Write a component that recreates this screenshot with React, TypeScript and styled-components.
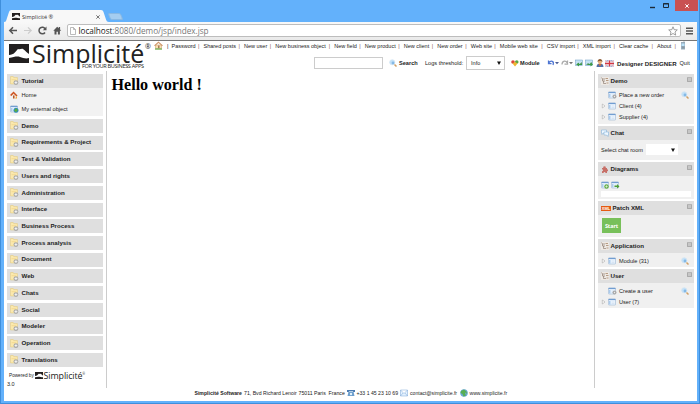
import React from "react";
import styled, { createGlobalStyle } from "styled-components";

const Global = createGlobalStyle`
  * { box-sizing: border-box; }
  html, body { margin: 0; padding: 0; }
  body { font-family: "Liberation Sans", Arial, sans-serif; color: #222; overflow: hidden; }
  svg { display: block; flex: none; }
`;

const Frame = styled.div`
  width: 700px; height: 404px; display: flex; flex-direction: column;
  background: #63b1fb; border: solid #3f8fdc; border-width: 0 1px 1px;
  padding: 0 2px 2px 3px;
`;
const TitleBar = styled.div`
  height: 22px; flex: none; display: flex; align-items: flex-start; justify-content: space-between;
`;
const TabStrip = styled.div`height: 22px; display: flex; align-items: flex-end;`;
const Tab = styled.div`
  position: relative; width: 105px; height: 12px; display: flex; align-items: center;
  padding: 1px 9px 0 8px; font: 5.6px "Open Sans", sans-serif; color: #333;
  > svg { z-index: 1; }
`;
const TabShape = styled.svg`position: absolute; left: 0; top: 0;`;
const TabTitle = styled.span`flex: 1; margin-left: 2px; z-index: 1; white-space: nowrap;`;
const NewTab = styled.div`
  width: 13px; height: 7px; margin: 0 0 2.5px 0; background: #a5cdf0; border: 1px solid #8ab9e3;
  border-radius: 2px; transform: skewX(22deg);
`;
const Controls = styled.div`display: flex; height: 11px; margin-right: -1px;`;
const Close = styled.div`
  width: 23px; height: 11px; background: #c95152; display: grid; place-items: center; margin-left: 3px;
`;
const Toolbar = styled.div`
  height: 19px; flex: none; display: flex; align-items: center; padding: 0 4px 1px 4px;
  background: linear-gradient(#f8f8f8, #e9e9e9); border-bottom: 1px solid #777;
`;
const Address = styled.div`
  flex: 1; height: 13px; margin: 0 5px 0 4px; border: 1px solid #bdbdbd; border-radius: 2px;
  background: #fff; display: flex; align-items: center; padding: 0 2px 0 2px;
  font: 8.2px/11px "Open Sans", sans-serif; color: #777;
  b { font-weight: 400; color: #222; }
  span { flex: 1; margin-left: 2.5px; letter-spacing: -0.04px; }
`;
const Page = styled.div`flex: 1; min-height: 0; background: #fff; display: flex; flex-direction: column;`;
const Header = styled.header`height: 30px; flex: none; display: flex;`;
const Brand = styled.div`
  width: 150px; flex: none; display: flex; padding: 3px 0 0 5px; color: #222;
`;
const BrandText = styled.div`
  position: relative; margin-left: 3px; width: 119px; height: 26px;
  font: 25px/26px "Open Sans", sans-serif; letter-spacing: 0; white-space: nowrap;
`;
const BrandName = styled.div`margin-top: -4px;`;
const Tagline = styled.div`
  position: absolute; left: 50px; top: 19px; font: 5.6px/7px "Open Sans", sans-serif;
  letter-spacing: -0.34px; color: #222;
`;
const Registered = styled.span`
  position: absolute; left: 113px; top: -1.5px; font: 7px/8px "Open Sans", sans-serif;
`;
const HeaderRows = styled.div`flex: 1; min-width: 0;`;
const Links = styled.nav`
  height: 9px; display: flex; align-items: center; font-size: 5.5px; line-height: 8px;
  white-space: nowrap; color: #222;
`;
const NavLink = styled.span<{ $w: number }>`
  width: ${(p) => p.$w}px; flex: none; display: flex; justify-content: space-between;
  padding-right: 4px;
  i { font-style: normal; color: #855; }
`;
const Actions = styled.div`
  height: 14px; margin-top: 6px; display: flex; align-items: center; padding-left: 160px;
  font-size: 6px; white-space: nowrap;
`;
const Field = styled.div`width: 69px; height: 12px; border: 1px solid #ccc; margin-right: 6px;`;
const Slot = styled.span<{ $w: number; $bold?: boolean; $size?: number }>`
  width: ${(p) => p.$w}px; flex: none; font-size: ${(p) => p.$size ?? 5.6}px;
  font-weight: ${(p) => (p.$bold ? 700 : 400)};
`;
const Select = styled.div<{ $w: number; $bordered?: boolean }>`
  width: ${(p) => p.$w}px; height: ${(p) => (p.$bordered ? 14 : 11.5)}px; flex: none;
  display: flex; align-items: center; justify-content: space-between; padding: 0 3px 0 4px;
  border: ${(p) => (p.$bordered ? "1px solid #ccc" : "0")}; background: #fff; font-size: 5.6px;
`;
const Columns = styled.div`height: 317px; flex: none; display: flex;`;
const Sidebar = styled.aside`
  width: 103px; flex: none; padding: 3px 3px 0; border-right: 1px solid #ccc;
  margin-right: 1px;
`;
const Heading = styled.div`
  height: 14px; display: flex; align-items: center; padding-left: 3px; background: #dfdfdf;
  font-size: 6.15px; font-weight: 700; color: #222; white-space: nowrap;
  > span { flex: 1; margin-left: 3px; padding-bottom: 1.6px; }
`;
const MenuBlock = styled.section`margin-bottom: 2.73px;`;
const MenuBody = styled.div`background: #f2f2f2; height: 28.3px;`;
const MenuItem = styled.div`
  height: 14.1px; display: flex; align-items: center; padding-left: 2.5px; gap: 3px; font-size: 5.7px;
`;
const Powered = styled.div`
  display: flex; align-items: center; height: 12px; margin-top: 1px; padding-left: 2px;
  font-size: 4.7px; white-space: nowrap;
`;
const SmallBrand = styled.span`
  font: 8.9px/12px "Open Sans", sans-serif; margin-left: 0.5px; letter-spacing: -0.1px;
  sup { font-size: 3px; line-height: 0; vertical-align: 4px; }
`;
const Version = styled.div`font-size: 5.5px; line-height: 7px; margin-top: -1px;`;
const Main = styled.main`flex: 1; padding: 4px 3.5px;`;
const Title = styled.h1`
  margin: 0; font: bold 16.1px/20px "Liberation Serif", "Times New Roman", serif; color: #000;
`;
const Panels = styled.aside`
  width: 103px; flex: none; border-left: 1px solid #ccc; padding: 3px 3px 0 3px;
`;
const Panel = styled.section<{ $h: number }>`
  height: ${(p) => p.$h}px; margin-bottom: 2.5px; background: #f0f0f0;
  ${Heading} > span { margin-left: 1.5px; }
`;
const PanelBody = styled.div<{ $top?: number }>`padding: ${(p) => p.$top ?? 2}px 3px 0;`;
const Row = styled.div<{ $indent?: boolean }>`
  height: 11.2px; display: flex; align-items: center; padding: 0 2px 0 ${(p) => (p.$indent ? 7 : 0)}px;
  font-size: 5.6px; white-space: nowrap;
`;
const RowText = styled.span<{ $gap?: number }>`flex: 1; margin-left: ${(p) => p.$gap ?? 3}px;`;
const Minimize = styled.i`
  width: 5px; height: 5px; margin: -3px 2px 0 0; border: 1px solid #aaa; border-top-color: #b5b5b5;
  border-radius: 1px; background: #c6c6c6;
`;
const IconPair = styled.div`display: flex; gap: 1px;`;
const Blank = styled.div`height: 6px; background: #fff; margin-top: 1.5px;`;
const Start = styled.button`
  width: 19px; height: 15px; padding: 0; margin-left: 1px; border: 0; background: #78c05a; color: #fff;
  font: bold 5.5px "Open Sans", sans-serif; letter-spacing: -0.1px; display: block;
`;
const XmlBadge = styled.i`
  width: 10px; height: 5px; background: #e55b12; color: #fff; font: bold 4px/5px "Liberation Sans", sans-serif;
  text-align: center;
`;
const Footer = styled.footer`
  height: 9px; display: flex; align-items: center; padding-left: 190.5px; font-size: 5.25px; white-space: nowrap;
`;

const Mountain = ({ w, h }: { w: number; h: number }) => (
  <svg width={w} height={h} viewBox="0 0 20 19" preserveAspectRatio="none">
    <path d="M0 0h20v10c-2-1-3-3-6-5-1.500-1-3 1-5 0C7 7 5 11 0 11z" fill="#221f1f" />
    <path d="M0 14c5-1 8-2 11-1 3 1 6 2 9 1v5H0z" fill="#221f1f" />
  </svg>
);
const Folder = () => (
  <svg width="8.500" height="9.500" viewBox="0 0 16 18">
    <path d="M1 1h5l1 2h7v12H1z" fill="#fbe9ae" stroke="#e3c778" />
    <path d="M3 7h8" stroke="#f1d58a" strokeWidth="1.500" />
    <circle cx="11.2" cy="12.500" r="4.600" fill="#aaa" />
    <path d="M8.500 12.500h5.400M11.200 9.800v5.400" stroke="#fff" strokeWidth="1.500" />
  </svg>
);
const House = ({ red }: { red?: boolean }) =>
  red ? (
    <svg width="9" height="8" viewBox="0 0 18 16">
      <path d="M3 7l6-5 6 6-2 7H6V9z" fill="#f5e6d5" />
      <path d="M0 8l7-7 8 8-2 2-6-6-4 5z" fill="#cc5220" />
      <path d="M6 9h3v6H6z" fill="#b45a2c" /><path d="M10 15l4-5v5z" fill="#eea53b" />
    </svg>
  ) : (
    <svg width="9" height="9" viewBox="0 0 18 18">
      <path d="M3 8h12v7H3z" fill="#f7ddb0" stroke="#c39562" />
      <path d="M0 9l9-8 9 8-2 1-7-6-7 6z" fill="#cf9467" />
      <path d="M8 9h3v6H8z" fill="#a77c58" /><path d="M2 16h14" stroke="#83b563" strokeWidth="3" />
    </svg>
  );
const Lens = () => (
  <svg width="8" height="8" viewBox="0 0 16 16">
    <circle cx="6.500" cy="6.500" r="5.200" fill="#c3e1f8" stroke="#d0e2f2" strokeWidth="1.2" />
    <circle cx="8" cy="8" r="2.800" fill="#85b9e5" />
    <path d="M11 11l4 4" stroke="#d0a067" strokeWidth="3" />
  </svg>
);
const Win = ({ badge }: { badge?: "gear" | "globe" | "go" | "add" }) => (
  <svg width={badge ? 9 : 8} height="8" viewBox={badge ? "0 0 18 16" : "0 0 16 16"}>
    <rect x="1" y="2" width="14" height="12" rx="1" fill="#edf6ff" stroke="#8ba8ca" />
    <path d="M1 3h14" stroke="#719dd1" strokeWidth="2.500" />
    <path d="M2 6h3v7H2z" fill="#abcbed" /><path d="M7 8h6M7 11h6" stroke="#c3d3e5" />
    {badge === "gear" && <g><circle cx="13" cy="11" r="4" fill="#aaa" /><circle cx="13" cy="11" r="1.300" fill="#eee" /></g>}
    {badge === "globe" && <g><circle cx="12" cy="10.5" r="5" fill="#2e8bc9" /><path d="M8 11l4-5 4 4-4 5z" fill="#5cac42" /></g>}
    {badge === "go" && <path d="M7 9h5V6l5 5-5 4v-3H7z" fill="#4e9e35" />}
    {badge === "add" && <g><circle cx="11" cy="11" r="4.5" fill="#68b048" /><path d="M8.5 11h5M11 8.5v5" stroke="#fff" /></g>}
  </svg>
);
const Expand = () => (
  <svg width="5" height="6" viewBox="0 0 5 6"><path d="M1.3 1l2.7 2-2.7 2z" fill="#fff" stroke="#aaa" strokeWidth=".6" /></svg>
);
const Down = () => (
  <svg width="4" height="4" viewBox="0 0 4 4"><path d="M0 .5h4L2 4z" fill="#111" /></svg>
);
const Tree = () => (
  <svg width="8" height="8" viewBox="0 0 16 16" fill="none" stroke="#8a776b" strokeWidth="1.3">
    <path d="M0 0h16v16H0z" fill="#eee9e4" stroke="none" />
    <path d="M1 1l2 3h5M3 4v4h5M5 8v5h5" /><path d="M9 3h5M10 7h5M11 12h4" stroke="#b69b83" strokeWidth="2" />
  </svg>
);
const Chat = () => (
  <svg width="8" height="8" viewBox="0 0 16 16" fill="#eef7ff" stroke="#76a8d7">
    <path d="M1 2h10v6H5l-3 3V8H1z" /><path d="M6 6h9v6h-1v3l-3-3H6z" />
  </svg>
);
const Puzzle = () => (
  <svg width="8" height="8" viewBox="0 0 16 16" fill="#c76f67">
    <path d="M2 6h2.500a2.700 2.700 0 1 1 5 0H12v2.500a2.200 2.200 0 1 1 0 4.400V16H9a2 2 0 0 0-4 0H2v-3.500a2 2 0 0 0 0-4z" />
  </svg>
);
const Balls = () => (
  <svg width="8" height="8" viewBox="0 0 16 16">
    <circle cx="4" cy="6" r="3.6" fill="#dc4636" /><circle cx="11.5" cy="6" r="3.6" fill="#59a744" /><path d="M3 9l5-3 5 3-5 6z" fill="#edb431" />
  </svg>
);
const Undo = ({ redo }: { redo?: boolean }) => (
  <svg width="14" height="8" viewBox="0 0 28 16">
    <path d={redo ? "M2 11c0-8 9-9 10-3M13 3v7H7" : "M3 3v6h6M3 8c5-6 12-4 9 4"} fill="none" stroke={redo ? "#aaa" : "#4d75d2"} strokeWidth="2.5" />
    <path d="M16 6h8l-4 4.500z" fill={redo ? "#777" : "#4c5d96"} />
  </svg>
);
const Picture = ({ flip }: { flip?: boolean }) => (
  <svg width="9" height="8" viewBox="0 0 18 16">
    <rect x="1" y="2" width="14" height="11" fill="#c5e2f4" stroke="#699ac3" />
    <path d="M2 12l4-4 3 2 5-4v6z" fill="#5b9d68" />
    <path d={flip ? "M6 10h5V7l5 4-5 4v-3H6z" : "M14 10H8V7l-5 4 5 4v-3h6z"} fill="#3c9c44" />
  </svg>
);
const Person = () => (
  <svg width="8" height="8" viewBox="0 0 16 16">
    <path d="M1 16c0-5 3-7 7-7s7 2 7 7z" fill="#536fa7" /><path d="M5 10h6l-3 5z" fill="#d86c38" />
    <circle cx="8" cy="6" r="4" fill="#e8ae78" /><path d="M3 6c0-8 10-8 10 0L10 4H6z" fill="#8b5a34" />
  </svg>
);
const Flag = () => (
  <svg width="9" height="7" viewBox="0 0 18 14">
    <path d="M0 1h18v12H0z" fill="#4961a6" /><path d="M0 1l18 12M18 1L0 13" stroke="#fff" strokeWidth="3" />
    <path d="M0 1l18 12M18 1L0 13" stroke="#d65460" /><path d="M9 1v12M0 7h18" stroke="#fff" strokeWidth="5" />
    <path d="M9 1v12M0 7h18" stroke="#d43642" strokeWidth="2.6" />
  </svg>
);
const Device = () => (
  <svg width="6" height="9" viewBox="0 0 12 18">
    <path d="M2 2h8v15H2z" fill="#9aaebd" /><path d="M3 5h6v5H3z" fill="#bce4fb" /><path d="M8 0v3M4 12h5M4 14h5" stroke="#73818a" />
  </svg>
);
const Contact = ({ kind }: { kind: "phone" | "mail" | "globe" }) => (
  <svg width="8" height="8" viewBox="0 0 16 16">
    {kind === "phone" && <g><path d="M0 2h16v4h-4V4H4v2H0z" fill="#4a7ab1" /><path d="M3 5h10l2 9H1z" fill="#6b9dcc" /><circle cx="8" cy="10" r="2.4" fill="#e4f2fb" /></g>}
    {kind === "mail" && <path d="M1 2h14v12H1zL8 9l7-7M1 14l5-6m9 6l-5-6" fill="#e4f2ff" stroke="#78a5d4" />}
    {kind === "globe" && <g><circle cx="8" cy="8" r="7.5" fill="#6ba9d6" /><path d="M2 4l6-3 5 4-3 4 2 4-5 2-2-5-4-2zM12 4l3 4-2 2z" fill="#57ae53" /></g>}
  </svg>
);

const links: [string, number][] = [
  ["Password", 32], ["Shared posts", 40.5], ["New user", 31.3], ["New business object", 59],
  ["New field", 30.5], ["New product", 39], ["New client", 33.5], ["New order", 33.5],
  ["Web site", 29], ["Mobile web site", 47], ["CSV import", 36], ["XML import", 36.2],
  ["Clear cache", 38], ["About", 23],
];
const menus = [
  "Demo", "Requirements & Project", "Test & Validation", "Users and rights", "Administration",
  "Interface", "Business Process", "Process analysis", "Document", "Web", "Chats", "Social",
  "Modeler", "Operation", "Translations",
];

const Head = ({ icon, text }: { icon: React.ReactNode; text: string }) => (
  <Heading>{icon}<span>{text}</span><Minimize /></Heading>
);
const TreeRow = ({ text, lens }: { text: string; lens?: boolean }) => (
  <Row><Expand /><Slot $w={2} /><Win /><RowText>{text}</RowText>{lens && <Lens />}</Row>
);
const CreateRow = ({ text }: { text: string }) => (
  <Row $indent><Win badge="gear" /><RowText $gap={2}>{text}</RowText><Lens /></Row>
);

export default function App() {
  return (
    <Frame>
      <Global />
      <TitleBar>
        <TabStrip>
          <Tab>
            <TabShape width="105" height="12" viewBox="0 0 105 12">
              <path d="M0 12c2 0 2-1 3-4l2-6c.5-1.3 1-2 2.500-2H97c1.500 0 2 .7 2.500 2l2 6c1 3 1.500 4 3.500 4z" fill="#f8f8f8" />
            </TabShape>
            <Mountain w={8} h={7} />
            <TabTitle>Simplicité ®</TabTitle>
            <svg width="4" height="4" viewBox="0 0 4 4"><path d="M.3.3l3.400 3.400M3.700.3L.3 3.700" stroke="#555" strokeWidth=".8" /></svg>
          </Tab>
          <NewTab />
        </TabStrip>
        <Controls>
          <svg width="22" height="11" viewBox="0 0 22 11" fill="none" stroke="#1c2a39">
            <path d="M0 7.500h5" strokeWidth="1.400" /><path d="M13.500 3.500h5v4h-5zM13 4h6" />
          </svg>
          <Close><svg width="4" height="4" viewBox="0 0 4 4"><path d="M.3.3l3.400 3.400M3.700.3L.3 3.700" stroke="#fff" /></svg></Close>
        </Controls>
      </TitleBar>
      <Toolbar>
        <svg width="55" height="11" viewBox="0 0 55 11" fill="none" stroke="#555" strokeWidth="1.500">
          <path d="M9 5.500H2M5 2.300L1.800 5.500 5 8.700" />
          <path d="M16 5.500h7M20 2.300l3.200 3.200L20 8.700" stroke="#ccc" strokeWidth="1.200" />
          <path d="M37 7.500a3.300 3.300 0 1 1 .2-3.600" /><path d="M38.500 1.500v3.700h-3.700z" fill="#555" stroke="none" />
          <path d="M45.300 5.700l3.900-4 1.600 1.500V2h1.300v2.600l1.100 1.100h-1.300v3.700h-2V6.800h-1.400v2.600h-2V5.700z" fill="#555" stroke="none" />
        </svg>
        <Address>
          <svg width="6" height="8" viewBox="0 0 6 8"><path d="M.5.5h3l2 2v5h-5zM3.500.5v2h2" fill="#fff" stroke="#aaa" strokeWidth=".8" /></svg>
          <span><b>localhost</b>:8080/demo/jsp/index.jsp</span>
          <svg width="10" height="10" viewBox="0 0 10 10"><path d="M5 .8l1.200 2.900 3.100.2L7 6l.7 3.100L5 7.500 2.300 9.100 3 6 .7 3.900l3.100-.2z" fill="#fff" stroke="#888" strokeWidth=".8" /></svg>
        </Address>
        <svg width="7" height="8" viewBox="0 0 7 8"><path d="M0 1.300h7M0 4h7M0 6.700h7" stroke="#555" strokeWidth="1.600" /></svg>
      </Toolbar>
      <Page>
        <Header>
          <Brand>
            <Mountain w={20} h={19} />
            <BrandText>
              <BrandName>Simplicité</BrandName><Registered>®</Registered><Tagline>FOR YOUR BUSINESS APPS</Tagline>
            </BrandText>
          </Brand>
          <HeaderRows>
            <Links>
              <Slot $w={13}><House /></Slot><Slot $w={4.500} $size={5.500}>|</Slot>
              {links.map(([t, w]) => <NavLink key={t} $w={w}>{t}<i>|</i></NavLink>)}
              <Device />
            </Links>
            <Actions>
              <Field />
              <Slot $w={10}><Lens /></Slot><Slot $w={26} $bold>Search</Slot>
              <Slot $w={41}>Logs threshold:</Slot>
              <Select $w={39} $bordered>Info<Down /></Select>
              <Slot $w={6} /><Slot $w={9}><Balls /></Slot><Slot $w={27} $bold>Module</Slot>
              <Undo /><Undo redo /><Slot $w={10}><Picture /></Slot><Slot $w={11}><Picture flip /></Slot>
              <Slot $w={9}><Person /></Slot><Slot $w={12}><Flag /></Slot>
              <Slot $w={62.500} $bold $size={6.100}>Designer DESIGNER</Slot><Slot $w={12}>Quit</Slot>
            </Actions>
          </HeaderRows>
        </Header>
        <Columns>
          <Sidebar>
            <MenuBlock>
              <Heading><Folder /><span>Tutorial</span></Heading>
              <MenuBody>
                <MenuItem><House red />Home</MenuItem>
                <MenuItem><Win badge="globe" />My external object</MenuItem>
              </MenuBody>
            </MenuBlock>
            {menus.map((m) => <MenuBlock key={m}><Heading><Folder /><span>{m}</span></Heading></MenuBlock>)}
            <Powered>Powered by&nbsp;<Mountain w={8} h={7} /><SmallBrand>Simplicité<sup>®</sup></SmallBrand></Powered>
            <Version>3.0</Version>
          </Sidebar>
          <Main><Title>Hello world !</Title></Main>
          <Panels>
            <Panel $h={49.500}>
              <Head icon={<Tree />} text="Demo" />
              <PanelBody $top={1}>
                <CreateRow text="Place a new order" />
                <TreeRow text="Client (4)" />
                <TreeRow text="Supplier (4)" />
              </PanelBody>
            </Panel>
            <Panel $h={33.500}>
              <Head icon={<Chat />} text="Chat" />
              <PanelBody $top={4}><Row><Slot $w={44.500}>Select chat room</Slot><Select $w={32}><i /><Down /></Select></Row></PanelBody>
            </Panel>
            <Panel $h={36.500}>
              <Head icon={<Puzzle />} text="Diagrams" />
              <PanelBody $top={5}><IconPair><Win badge="add" /><Win badge="go" /></IconPair><Blank /></PanelBody>
            </Panel>
            <Panel $h={35.800}>
              <Head icon={<XmlBadge>XML</XmlBadge>} text="Patch XML" />
              <PanelBody $top={3}><Start>Start</Start></PanelBody>
            </Panel>
            <Panel $h={27.500}>
              <Head icon={<Tree />} text="Application" />
              <PanelBody><TreeRow text="Module (31)" lens /></PanelBody>
            </Panel>
            <Panel $h={39}>
              <Head icon={<Tree />} text="User" />
              <PanelBody>
                <CreateRow text="Create a user" />
                <TreeRow text="User (7)" />
              </PanelBody>
            </Panel>
          </Panels>
        </Columns>
        <Footer>
          <Slot $w={49.500} $bold $size={5.150}>Simplicité Software</Slot>
          <Slot $w={54.500} $size={5.200}>71, Bvd Richard Lenoir</Slot>
          <Slot $w={30} $size={5.200}>75011 Paris</Slot><Slot $w={18.500} $size={5.250}>France</Slot>
          <Contact kind="phone" /><Slot $w={1.500} /><Slot $w={43.500} $size={5.150}>+33 1 45 23 10 69</Slot>
          <Contact kind="mail" /><Slot $w={2} /><Slot $w={50} $size={5.100}>contact@simplicite.fr</Slot>
          <Contact kind="globe" /><Slot $w={1.500} /><Slot $w={40} $size={5.100}>www.simplicite.fr</Slot>
        </Footer>
      </Page>
    </Frame>
  );
}
